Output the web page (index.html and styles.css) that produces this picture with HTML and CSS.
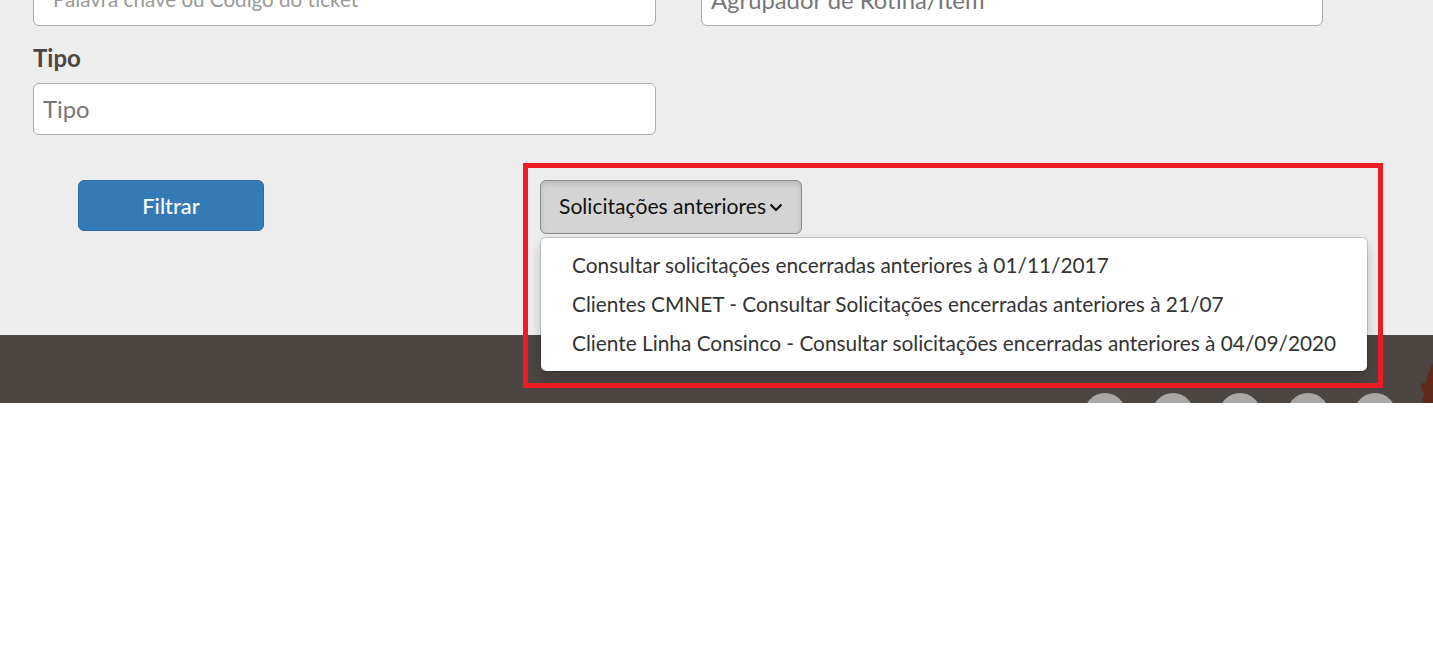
FILE: index.html
```html
<!DOCTYPE html>
<html>
  <head>
    <title>Solicitações</title>
    <link rel="stylesheet" href="styles.css">
  </head>
  <body>
    <div class="page">
      <div class="filter-area">
        <div class="filter-grid">
          <div class="field">
            <input class="text-input small" type="text" placeholder="Palavra chave ou Código do ticket">
          </div>
          <div class="field">
            <input class="text-input" type="text" placeholder="Agrupador de Rotina/Item">
          </div>
          <div class="field">
            <label class="field-label">Tipo</label>
            <input class="text-input" type="text" placeholder="Tipo">
          </div>
        </div>
        <div class="actions">
          <button class="btn-filter">Filtrar</button>
          <div class="dropdown">
            <button class="btn-previous">
              <span class="btn-text">Solicitações anteriores</span>
              <svg class="chevron" width="14" height="9" viewBox="0 0 14 9"><path d="M1.5 1.5 L7 7 L12.5 1.5" fill="none" stroke="#111" stroke-width="2.2"/></svg>
            </button>
            <div class="dropdown-menu">
              <a href="#" class="dropdown-item">Consultar solicitações encerradas anteriores à 01/11/2017</a>
              <a href="#" class="dropdown-item">Clientes CMNET - Consultar Solicitações encerradas anteriores à 21/07</a>
              <a href="#" class="dropdown-item">Cliente Linha Consinco - Consultar solicitações encerradas anteriores à 04/09/2020</a>
            </div>
          </div>
        </div>
      </div>
      <div class="footer">
        <div class="social">
          <span class="circle"></span>
          <span class="circle"></span>
          <span class="circle"></span>
          <span class="circle"></span>
          <span class="circle"></span>
        </div>
        <svg class="mascot" width="13" height="40" viewBox="0 0 13 40"><path d="M13 0 L13 40 L3 40 L2 35 L5 32 L1 26 L1 21 L6 19 L8 10 Z" fill="#5f2a1c"/></svg>
      </div>
      <div class="highlight"></div>
    </div>
  </body>
</html>
```

FILE: styles.css
```css
body {
  font-family: Lato, "Open Sans", sans-serif;
  background-color: #ffffff;
  margin: 0;
  padding: 0;
}

.page {
  position: relative;
  height: 403px;
  overflow: hidden;
  background-color: #ededed;
}

.filter-area {
  display: flow-root;
  height: 335px;
  padding: 0 33px;
  box-sizing: border-box;
}

.filter-grid {
  display: grid;
  grid-template-columns: 623px 622px;
  column-gap: 45px;
  row-gap: 15px;
  margin-top: -26px;
}

.field-label {
  display: block;
  font-size: 24px;
  font-weight: 700;
  line-height: 34px;
  color: #4b4641;
  margin-bottom: 8px;
}

.text-input {
  display: block;
  width: 100%;
  height: 52px;
  box-sizing: border-box;
  padding: 0 9px 1px;
  font-family: inherit;
  font-size: 23.8px;
  color: #333;
  background-color: #ffffff;
  border: 1px solid #aaaaaa;
  border-radius: 6px;
}

.text-input::placeholder {
  color: #777;
  opacity: 1;
}

.text-input.small {
  font-size: 20.6px;
  padding-left: 19px;
  padding-bottom: 2px;
}

.text-input.small::placeholder {
  color: #999;
}

.actions {
  display: flex;
  align-items: flex-start;
  margin-top: 45px;
  padding-left: 45px;
}

.btn-filter {
  width: 186px;
  height: 51px;
  font-family: inherit;
  font-size: 21.8px;
  font-weight: 500;
  color: #ffffff;
  background-color: #337ab7;
  border: 1px solid #2e6da4;
  border-radius: 6px;
}

.dropdown {
  margin-left: 276px;
  position: relative;
}

.btn-previous {
  display: flex;
  align-items: center;
  gap: 3px;
  height: 54px;
  padding: 0 18px 4px;
  font-family: inherit;
  font-size: 21.1px;
  color: #111;
  background-color: #d4d4d4;
  border: 1px solid #8c8c8c;
  border-radius: 6px;
  box-shadow: inset 0 3px 5px rgba(0, 0, 0, 0.125);
}

.chevron {
  margin-top: 4px;
}

.dropdown-menu {
  position: absolute;
  top: 57px;
  left: 0;
  width: 828px;
  box-sizing: border-box;
  padding: 7px 0 9px;
  background-color: #ffffff;
  background-clip: padding-box;
  border: 1px solid rgba(0, 0, 0, 0.15);
  border-radius: 6px;
  box-shadow: 0 6px 12px rgba(0, 0, 0, 0.175);
  z-index: 2;
}

.dropdown-item {
  display: block;
  padding: 0 30px 0 31px;
  font-size: 20.84px;
  line-height: 39px;
  color: #333;
  text-decoration: none;
  white-space: nowrap;
}

.footer {
  position: relative;
  height: 68px;
  background-color: #4b4641;
}

.social {
  display: flex;
  justify-content: flex-end;
  gap: 25.5px;
  padding: 58px 37px 0 0;
}

.circle {
  width: 42px;
  height: 42px;
  border-radius: 50%;
  background-color: #a9a8a6;
}

.mascot {
  position: absolute;
  right: 0;
  top: 28px;
}

.highlight {
  position: absolute;
  left: 523px;
  top: 163px;
  width: 860px;
  height: 225px;
  box-sizing: border-box;
  border: 5px solid #ed1c24;
  z-index: 3;
}
```
